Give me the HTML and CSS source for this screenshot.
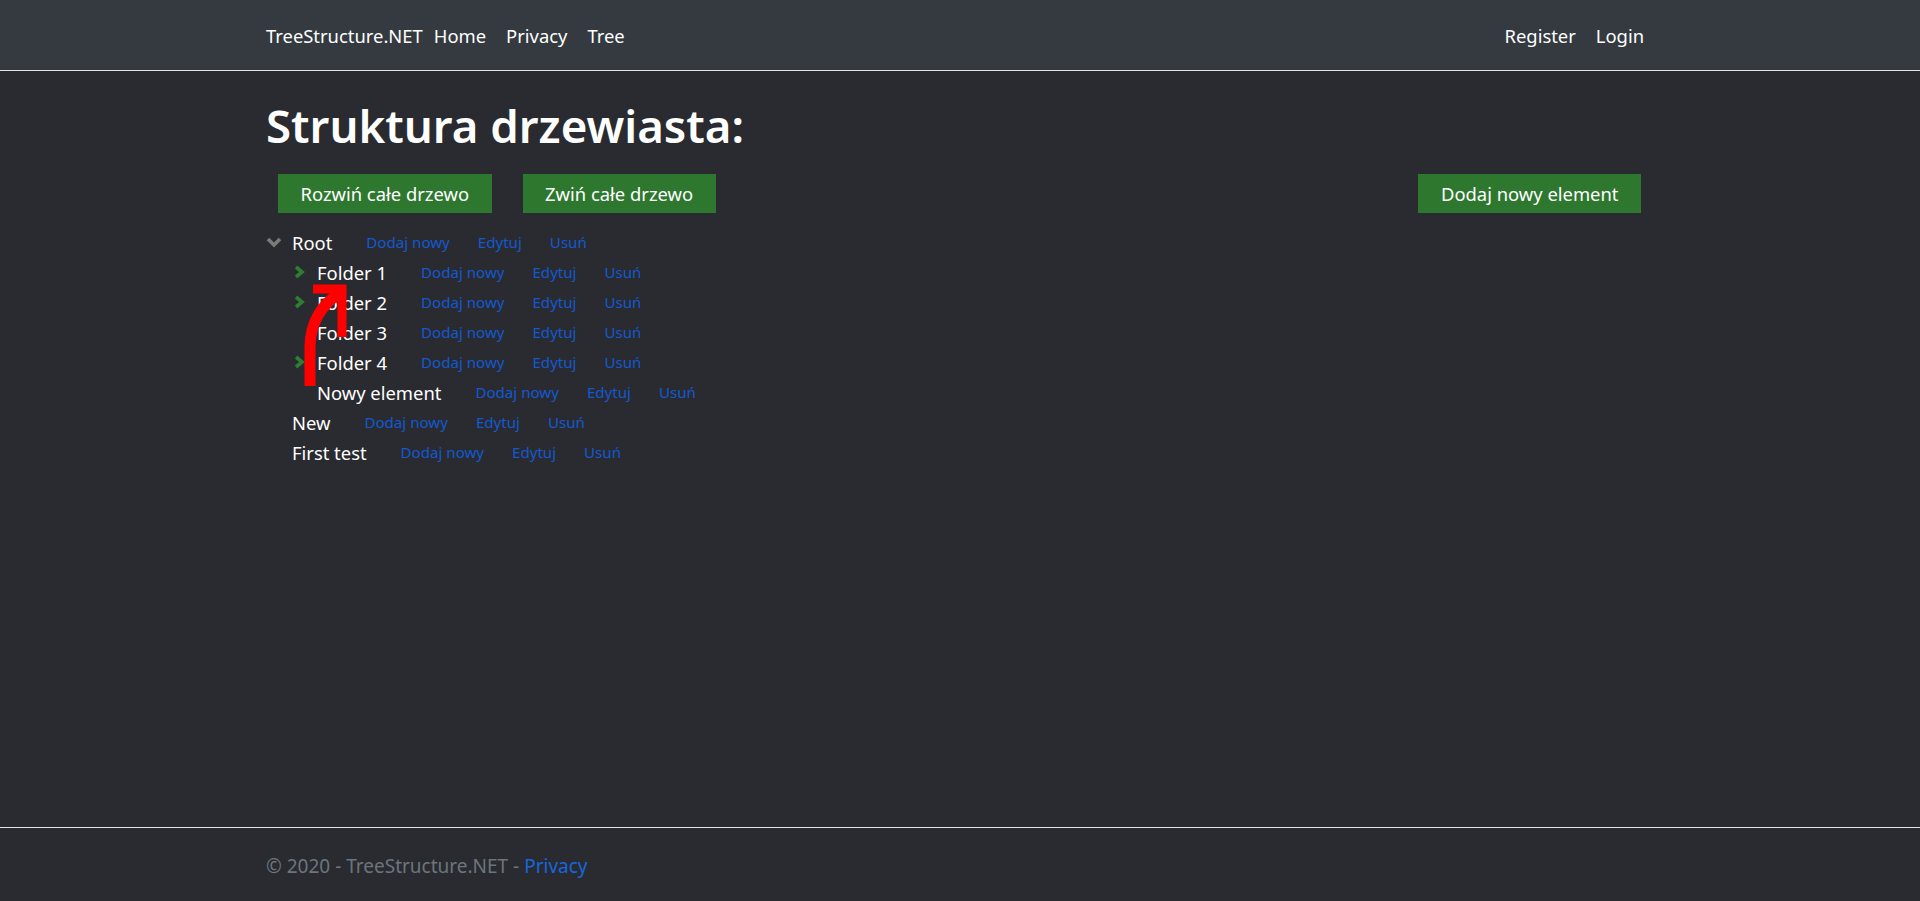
FILE: index.html
```html
<!DOCTYPE html>
<html lang="pl">
<head>
<meta charset="utf-8">
<title>Tree - TreeStructure.NET</title>
<link rel="stylesheet" href="styles.css">
</head>
<body>
<header class="navbar">
  <div class="container nav-inner">
    <a class="brand" href="#">TreeStructure.NET</a>
    <ul class="nav-links">
      <li><a class="nav-link" href="#">Home</a></li>
      <li><a class="nav-link" href="#">Privacy</a></li>
      <li><a class="nav-link" href="#">Tree</a></li>
    </ul>
    <ul class="nav-links nav-right">
      <li><a class="nav-link" href="#">Register</a></li>
      <li><a class="nav-link" href="#">Login</a></li>
    </ul>
  </div>
</header>

<main class="container main">
  <h1 class="title">Struktura drzewiasta:</h1>
  <div class="toolbar">
    <button class="btn">Rozwiń całe drzewo</button>
    <button class="btn">Zwiń całe drzewo</button>
    <button class="btn btn-right">Dodaj nowy element</button>
  </div>

  <div class="tree">
    <ul class="tree-list">
      <li>
        <div class="row">
          <span class="toggle"><svg class="chev-down" width="16" height="11" viewBox="0 0 16 11"><polyline points="2,2 8,8 14,2" fill="none" stroke="#7b7b7b" stroke-width="3.6"/></svg></span>
          <span class="label">Root</span>
          <a class="act first" href="#">Dodaj nowy</a><a class="act" href="#">Edytuj</a><a class="act" href="#">Usuń</a>
        </div>
        <ul class="tree-list child">
          <li><div class="row">
            <span class="toggle"><svg class="chev-right" width="12" height="14" viewBox="0 0 12 14"><polyline points="2,2 8,7 2,12" fill="none" stroke="#2e7d32" stroke-width="3.6"/></svg></span>
            <span class="label">Folder 1</span>
            <a class="act first" href="#">Dodaj nowy</a><a class="act" href="#">Edytuj</a><a class="act" href="#">Usuń</a>
          </div></li>
          <li><div class="row">
            <span class="toggle"><svg class="chev-right" width="12" height="14" viewBox="0 0 12 14"><polyline points="2,2 8,7 2,12" fill="none" stroke="#2e7d32" stroke-width="3.6"/></svg></span>
            <span class="label">Folder 2</span>
            <a class="act first" href="#">Dodaj nowy</a><a class="act" href="#">Edytuj</a><a class="act" href="#">Usuń</a>
          </div></li>
          <li><div class="row">
            <span class="toggle"></span>
            <span class="label">Folder 3</span>
            <a class="act first" href="#">Dodaj nowy</a><a class="act" href="#">Edytuj</a><a class="act" href="#">Usuń</a>
          </div></li>
          <li><div class="row">
            <span class="toggle"><svg class="chev-right" width="12" height="14" viewBox="0 0 12 14"><polyline points="2,2 8,7 2,12" fill="none" stroke="#2e7d32" stroke-width="3.6"/></svg></span>
            <span class="label">Folder 4</span>
            <a class="act first" href="#">Dodaj nowy</a><a class="act" href="#">Edytuj</a><a class="act" href="#">Usuń</a>
          </div></li>
          <li><div class="row">
            <span class="toggle"></span>
            <span class="label">Nowy element</span>
            <a class="act first" href="#">Dodaj nowy</a><a class="act" href="#">Edytuj</a><a class="act" href="#">Usuń</a>
          </div></li>
        </ul>
      </li>
      <li><div class="row">
        <span class="toggle"></span>
        <span class="label">New</span>
        <a class="act first" href="#">Dodaj nowy</a><a class="act" href="#">Edytuj</a><a class="act" href="#">Usuń</a>
      </div></li>
      <li><div class="row">
        <span class="toggle"></span>
        <span class="label">First test</span>
        <a class="act first" href="#">Dodaj nowy</a><a class="act" href="#">Edytuj</a><a class="act" href="#">Usuń</a>
      </div></li>
    </ul>
    <svg class="annotation" width="52" height="110" viewBox="0 0 52 110">
      <path d="M10 106 L10 66 Q11 31 41 12" fill="none" stroke="#ff0000" stroke-width="11"/>
      <path d="M13 9 H42 V57" fill="none" stroke="#ff0000" stroke-width="9" stroke-linejoin="miter"/>
    </svg>
  </div>
</main>

<footer class="footer">
  <div class="container">
    © 2020 - TreeStructure.NET - <a class="footer-link" href="#">Privacy</a>
  </div>
</footer>
</body>
</html>
```

FILE: styles.css
```css
* { box-sizing: border-box; }

html, body { margin: 0; padding: 0; }

body {
  min-height: 100vh;
  display: flex;
  flex-direction: column;
  background: #2a2b30;
  color: #ffffff;
  font-family: "Noto Sans", "Open Sans", sans-serif;
  font-size: 18.4px;
}

a { text-decoration: none; }

.container {
  width: 1388px;
  margin: 0 auto;
}

/* navbar */
.navbar {
  background: #343a40;
  border-bottom: 1px solid #e4e4e4;
}
.nav-inner {
  height: 70px;
  display: flex;
  align-items: center;
  padding-top: 2px;
}
.brand {
  color: #ffffff;
  font-size: 18.4px;
  line-height: 30px;
  margin-right: 1px;
}
.nav-links {
  list-style: none;
  margin: 0;
  padding: 0;
  display: flex;
}
.nav-right { margin-left: auto; }
.nav-link {
  display: block;
  color: #ffffff;
  padding: 0 10px;
  line-height: 30px;
  font-size: 18.4px;
}

/* main */
.main { padding-top: 27px; }

.title {
  margin: 0;
  font-size: 45.6px;
  font-weight: 600;
  line-height: 55px;
  color: #ffffff;
}

.toolbar {
  display: flex;
  gap: 31px;
  margin: 21px 13px 0 12px;
}
.btn {
  background: #2e772f;
  color: #ffffff;
  border: none;
  border-radius: 0;
  height: 39px;
  padding: 0 22.5px;
  font-family: inherit;
  font-size: 18.4px;
}
.btn-right { margin-left: auto; }

/* tree */
.tree {
  position: relative;
  margin-top: 14px;
}
.tree-list {
  list-style: none;
  margin: 0;
  padding: 0;
}
.tree-list.child { padding-left: 25px; }
.row {
  height: 30px;
  display: flex;
  align-items: center;
  white-space: nowrap;
}
.toggle {
  width: 26px;
  height: 30px;
  flex: none;
  display: flex;
  align-items: center;
}
.chev-down { margin-left: 0; }
.chev-right { margin-left: 3px; }
.label {
  font-size: 18.4px;
  color: #ffffff;
}
.act {
  font-size: 15.1px;
  color: #1259d0;
  margin-left: 28px;
}
.act.first { margin-left: 34px; }

.annotation {
  position: absolute;
  left: 34px;
  top: 53px;
}

/* footer */
.footer {
  margin-top: auto;
  border-top: 1px solid #e4e4e4;
  height: 74px;
  line-height: 73px;
  padding-top: 2px;
  color: #6c757d;
  font-size: 19px;
}
.footer-link { color: #1667dc; }
```
